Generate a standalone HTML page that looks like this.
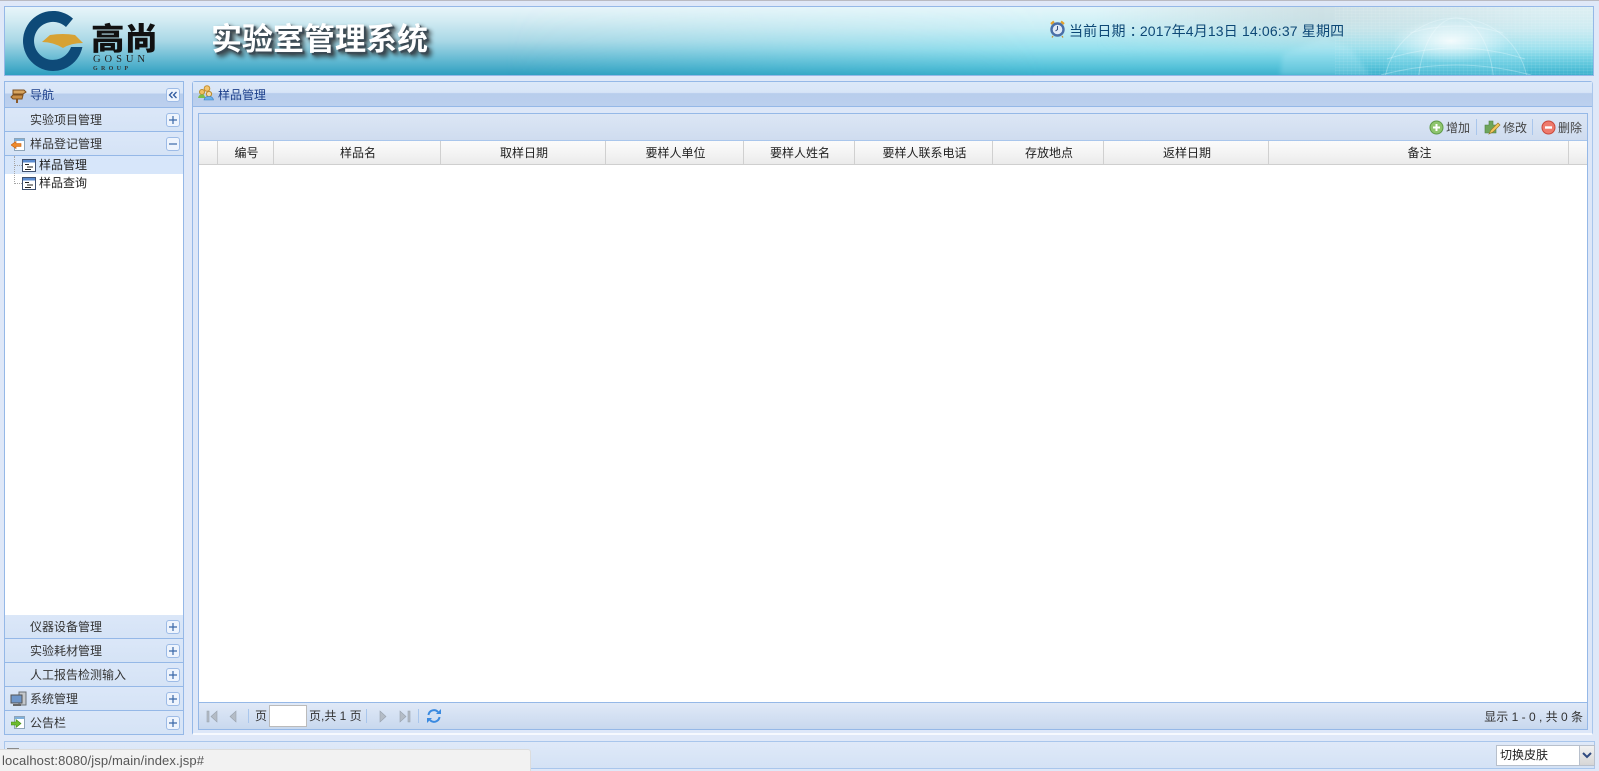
<!DOCTYPE html>
<html><head><meta charset="utf-8">
<style>
html,body{margin:0;padding:0}
body{width:1599px;height:771px;overflow:hidden;position:relative;background:#dfe8f8;font:12px/16px "Liberation Sans","Noto Sans CJK SC",sans-serif;color:#333}
.a{position:absolute;box-sizing:border-box}
.t{position:absolute;white-space:nowrap}
.acc{position:absolute;left:5px;width:179px;height:24px;box-sizing:border-box;background:linear-gradient(#dbe7f8,#d5e3f6);border-bottom:1px solid #95b8e7}
.acc .t{left:25px;top:4px;font-size:12px;line-height:17px;color:#333}
.btn{position:absolute;left:161px;top:5px;width:14px;height:14px;border:1px solid #9dbbe6;border-radius:3px;background:#eef4fd;box-sizing:border-box}
.btn svg{position:absolute;left:1px;top:1px}
.th{position:absolute;top:0;height:23px;line-height:25px;text-align:center;padding-left:2px;border-right:1px solid #d0d0d0;color:#222;box-sizing:border-box}
.sep{position:absolute;width:1px;background:#a9c6ec}
</style></head><body>
<div class="a" style="left:0;top:0;width:1599px;height:1px;background:#b9bac2"></div>

<!-- header -->
<div class="a" style="left:4px;top:6px;width:1590px;height:70px;border:1px solid #95b8e7;overflow:hidden;background:linear-gradient(#e8f5fa 0%,#d4ecf3 18%,#a9d8e6 50%,#63b9d2 78%,#2f9fc0 100%)">
 <div class="a" style="left:500px;top:0;width:1090px;height:70px;background:linear-gradient(#e4f6fa 0%,#c8eef5 30%,#94e0ee 60%,#57c3da 85%,#36acc9 100%);-webkit-mask-image:linear-gradient(90deg,transparent,#000 50%);mask-image:linear-gradient(90deg,transparent,#000 50%)"></div>
 <div class="a" style="left:1090px;top:0;width:500px;height:50px;background:linear-gradient(90deg,rgba(190,215,220,0),rgba(195,212,216,.6) 45%,rgba(215,232,236,.5) 90%);-webkit-mask-image:linear-gradient(#000 25%,transparent);mask-image:linear-gradient(#000 25%,transparent)"></div>
 <div class="a" style="left:1330px;top:0;width:260px;height:70px;background:repeating-linear-gradient(0deg,rgba(255,255,255,.07) 0 1px,transparent 1px 3px),repeating-linear-gradient(90deg,rgba(255,255,255,.06) 0 1px,transparent 1px 4px)"></div>
 <svg class="a" style="left:1270px;top:0" width="320" height="70" viewBox="0 0 320 70">
  <defs><radialGradient id="g1"><stop offset="0" stop-color="#fff" stop-opacity=".85"/><stop offset="1" stop-color="#fff" stop-opacity="0"/></radialGradient><filter id="b1"><feGaussianBlur stdDeviation="2"/></filter></defs>
  <path d="M8 47L50 30L76 42L95 68H5Z" fill="#c8f3f9" fill-opacity=".22" filter="url(#b1)"/>
  <circle cx="181" cy="83" r="72" fill="#b0eef7" fill-opacity=".16" filter="url(#b1)"/>
  <g fill="none" stroke="#eefcfe" stroke-opacity=".32"><circle cx="181" cy="83" r="72"/><ellipse cx="181" cy="83" rx="38" ry="72"/><path d="M112 52Q181 30 250 52M106 68Q181 48 256 68M135 26Q181 12 228 26"/></g>
  <ellipse cx="176" cy="34" rx="60" ry="22" fill="url(#g1)"/>
 </svg>
 <svg class="a" style="left:0;top:0" width="170" height="68" viewBox="0 0 170 68">
  <path d="M68 11.600A30 30 0 1 0 77.400 40H66A19 19 0 1 1 61 20Z" fill="#0e4a78"/>
  <path d="M37 35L45 28Q58 26 70 28L78 36Q66 36 58 41Q48 35 37 35Z" fill="#d7a234"/>
  <text x="86" y="43" font-family="'Noto Sans CJK SC',sans-serif" font-size="31" font-weight="900" fill="#111" textLength="67" lengthAdjust="spacingAndGlyphs">高尚</text>
  <text x="88" y="55" font-family="'Liberation Serif',serif" font-size="10.500" fill="#222" textLength="52">GOSUN</text>
  <text x="88" y="63" font-family="'Liberation Serif',serif" font-size="6" font-weight="700" fill="#333" textLength="35">GROUP</text>
 </svg>
 <div class="t" style="left:206px;top:9px;font:700 31px/42px 'Noto Sans CJK SC',sans-serif;color:#fff;text-shadow:2px 2px 1px #3a4a55,3px 3px 4px #333,5px 5px 5px rgba(0,0,0,.45)">实验室管理系统</div>
 <svg class="a" style="left:1045px;top:13px" width="15" height="18" viewBox="0 0 15 18"><circle cx="7.500" cy="9.500" r="6" fill="#dfe9f7" stroke="#4a6fa8" stroke-width="2.400"/><path d="M7.500 6V9.500L5.500 11" stroke="#33507f" fill="none"/><path d="M1 4L4 1.500M14 4L11 1.500" stroke="#e2a02c" stroke-width="2.200"/><path d="M3 16L2 17.500M12 16L13 17.500" stroke="#c89030" stroke-width="1.200"/></svg>
 <div class="t" style="left:1064px;top:14px;font-size:14px;line-height:20px;letter-spacing:.16px;color:#0d4876">当前日期<span style="position:relative;left:4px">：</span>2017年4月13日 14:06:37 星期四</div>
</div>

<!-- west panel -->
<div class="a" style="left:4px;top:81px;height:654px;border:1px solid #95b8e7;border-bottom-width:2px;background:#fff;width:180px"></div>
<div class="a" style="left:5px;top:82px;width:178px;height:26px;background:linear-gradient(#dce8f8 0,#d8e5f7 44%,#b8cdec 48%,#bcd0ee 100%);border-bottom:1px solid #95b8e7"></div>
<svg class="a" style="left:10px;top:88px" width="17" height="16" viewBox="0 0 17 16"><path d="M7 3V15" stroke="#8a5a2a" stroke-width="2"/><path d="M3 2H14L16 4L13 6H3Z" fill="#d8a55f" stroke="#7d5020"/><path d="M13 7H3L1 9L3 11H12Z" fill="#c98f48" stroke="#7d5020"/></svg>
<div class="t" style="left:30px;top:87px;color:#1c3f8a;line-height:17px">导航</div>
<div class="a" style="left:166px;top:88px;width:14px;height:14px;border:1px solid #9dbbe6;border-radius:3px;background:#eef4fd"><svg style="position:absolute;left:1px;top:1px" width="10" height="10" viewBox="0 0 10 10"><path d="M4.500 2L1.500 5L4.500 8M8.500 2L5.500 5L8.500 8" fill="none" stroke="#2f5a9f" stroke-width="1.300"/></svg></div>

<div class="acc" style="top:108px;width:178px"><div class="t">实验项目管理</div><div class="btn"><svg width="10" height="10"><path d="M5 1V9M1 5H9" stroke="#3a68a8" stroke-width="1.200"/></svg></div></div>
<div class="acc" style="top:132px;width:178px"><div class="t">样品登记管理</div><div class="btn"><svg width="10" height="10"><path d="M1 5H9" stroke="#3a68a8" stroke-width="1.200"/></svg></div>
 <svg style="position:absolute;left:6px;top:5px" width="15" height="15" viewBox="0 0 15 15"><rect x="3.500" y="1.500" width="10" height="12" fill="#fff" stroke="#8ea4b8"/><rect x="4" y="2" width="9" height="2" fill="#7fb0dc"/><path d="M0 8L5 4.500V6.500H10V9.500H5V11.500Z" fill="#ef8a2b" stroke="#c65f10" stroke-width=".6"/></svg>
</div>

<!-- tree -->
<div class="a" style="left:5px;top:156px;width:178px;height:18px;background:#d7e6fa"></div>
<div class="a" style="left:14px;top:156px;height:28px;border-left:1px dotted #a5a5a5"></div>
<div class="a" style="left:14px;top:165px;width:8px;border-top:1px dotted #a5a5a5"></div>
<div class="a" style="left:14px;top:183px;width:8px;border-top:1px dotted #a5a5a5"></div>
<svg class="a" style="left:22px;top:159px" width="14" height="13" viewBox="0 0 14 13"><rect x=".5" y=".5" width="13" height="12" fill="#fff" stroke="#3e4f6e"/><rect x="1" y="1" width="12" height="2.500" fill="#5a8bd0"/><path d="M3 5.500H7M5 8H11M3 10.500H9" stroke="#222"/></svg>
<svg class="a" style="left:22px;top:177px" width="14" height="13" viewBox="0 0 14 13"><rect x=".5" y=".5" width="13" height="12" fill="#fff" stroke="#3e4f6e"/><rect x="1" y="1" width="12" height="2.500" fill="#5a8bd0"/><path d="M3 5.500H7M5 8H11M3 10.500H9" stroke="#222"/></svg>
<div class="t" style="left:39px;top:157px;line-height:17px;color:#222">样品管理</div>
<div class="t" style="left:39px;top:175px;line-height:17px;color:#222">样品查询</div>

<div class="acc" style="top:615px;width:178px"><div class="t">仪器设备管理</div><div class="btn"><svg width="10" height="10"><path d="M5 1V9M1 5H9" stroke="#3a68a8" stroke-width="1.200"/></svg></div></div>
<div class="acc" style="top:639px;width:178px"><div class="t">实验耗材管理</div><div class="btn"><svg width="10" height="10"><path d="M5 1V9M1 5H9" stroke="#3a68a8" stroke-width="1.200"/></svg></div></div>
<div class="acc" style="top:663px;width:178px"><div class="t">人工报告检测输入</div><div class="btn"><svg width="10" height="10"><path d="M5 1V9M1 5H9" stroke="#3a68a8" stroke-width="1.200"/></svg></div></div>
<div class="acc" style="top:687px;width:178px"><div class="t">系统管理</div><div class="btn"><svg width="10" height="10"><path d="M5 1V9M1 5H9" stroke="#3a68a8" stroke-width="1.200"/></svg></div>
 <svg style="position:absolute;left:5px;top:4px" width="17" height="16" viewBox="0 0 17 16"><rect x="9" y="1" width="7" height="13" fill="#c4c8cc" stroke="#6c7278"/><rect x="1" y="4" width="11" height="8" fill="#6f96c9" stroke="#555"/><path d="M3 14H11" stroke="#666" stroke-width="2"/></svg>
</div>
<div class="acc" style="top:711px;width:178px;height:23px;border-bottom:0"><div class="t">公告栏</div><div class="btn"><svg width="10" height="10"><path d="M5 1V9M1 5H9" stroke="#3a68a8" stroke-width="1.200"/></svg></div>
 <svg style="position:absolute;left:6px;top:4px" width="15" height="15" viewBox="0 0 15 15"><rect x="3.500" y="1.500" width="10" height="12" fill="#fff" stroke="#8ea4b8"/><rect x="4" y="2" width="9" height="2" fill="#7fb0dc"/><path d="M0 7H5V4.500L10 8.500L5 12.500V10H0Z" fill="#6dbb2f" stroke="#3e8a10" stroke-width=".6"/></svg>
</div>

<!-- center panel -->
<div class="a" style="left:192px;top:81px;width:1401px;height:654px;border:1px solid #95b8e7;border-radius:3px 3px 0 0;border-bottom:2px solid #f6f9fe;border-right-color:#a9c6ec;background:#dde7f8"></div>
<div class="a" style="left:193px;top:82px;width:1399px;height:25px;background:linear-gradient(#dce8f8 0,#d8e5f7 44%,#b8cdec 48%,#bcd0ee 100%);border-bottom:1px solid #95b8e7"></div>
<svg class="a" style="left:198px;top:85px" width="16" height="16" viewBox="0 0 16 16"><circle cx="4" cy="7" r="2.500" fill="#f0c060" stroke="#b98a2a"/><path d="M0 13Q1 9 4 9.500Q6 9 7 12V13Z" fill="#7bbd4a"/><circle cx="9" cy="3.500" r="2.800" fill="#f3c670" stroke="#c89030"/><circle cx="11" cy="9" r="2.600" fill="#f5d7a0" stroke="#b98a2a"/><path d="M6 15Q7 11 11 11.500Q14.500 11 15.500 15Z" fill="#6ab0ea" stroke="#3f82c0" stroke-width=".6"/></svg>
<div class="t" style="left:218px;top:87px;line-height:17px;color:#1c3f8a">样品管理</div>

<!-- grid -->
<div class="a" style="left:198px;top:113px;width:1390px;height:617px;border:1px solid #95b8e7;background:#fff"></div>
<div class="a" style="left:199px;top:114px;width:1388px;height:27px;background:linear-gradient(#dce6f5,#cfdcef);border-bottom:1px solid #a9c6ec"></div>
<svg class="a" style="left:1429px;top:120px" width="15" height="15" viewBox="0 0 15 15"><circle cx="7.500" cy="7.500" r="6.500" fill="#8ec56e" stroke="#5e9a47"/><path d="M7.500 4V11M4 7.500H11" stroke="#fff" stroke-width="2"/></svg>
<div class="t" style="left:1446px;top:120px;line-height:17px;color:#444">增加</div>
<div class="sep" style="left:1476px;top:119px;height:16px"></div>
<svg class="a" style="left:1484px;top:119px" width="17" height="17" viewBox="0 0 17 17"><path d="M1 6H5V2H9V6H12V14H1Z" fill="#6fa55a" stroke="#4c8040" stroke-width=".6"/><path d="M5 15L7 11L14 4L16 6L9 13Z" fill="#f2c85c" stroke="#9a7a2a" stroke-width=".7"/></svg>
<div class="t" style="left:1503px;top:120px;line-height:17px;color:#444">修改</div>
<div class="sep" style="left:1532px;top:119px;height:16px"></div>
<svg class="a" style="left:1541px;top:120px" width="15" height="15" viewBox="0 0 15 15"><circle cx="7.500" cy="7.500" r="6.500" fill="#ee7a6c" stroke="#c9483a"/><path d="M4 7.500H11" stroke="#fff" stroke-width="2.400"/></svg>
<div class="t" style="left:1558px;top:120px;line-height:17px;color:#444">删除</div>

<div class="a" style="left:199px;top:141px;width:1388px;height:24px;background:linear-gradient(#fbfbfb,#f4f4f4 50%,#ebebeb);border-bottom:1px solid #cfcfcf">
 <div class="th" style="left:0;width:19px"></div>
 <div class="th" style="left:19px;width:56px">编号</div>
 <div class="th" style="left:75px;width:167px">样品名</div>
 <div class="th" style="left:242px;width:165px">取样日期</div>
 <div class="th" style="left:407px;width:138px">要样人单位</div>
 <div class="th" style="left:545px;width:111px">要样人姓名</div>
 <div class="th" style="left:656px;width:138px">要样人联系电话</div>
 <div class="th" style="left:794px;width:111px">存放地点</div>
 <div class="th" style="left:905px;width:165px">返样日期</div>
 <div class="th" style="left:1070px;width:300px">备注</div>
</div>

<!-- pager -->
<div class="a" style="left:199px;top:702px;width:1388px;height:27px;background:linear-gradient(#e0e9f7,#c8d8ee);border-top:1px solid #95b8e7"></div>
<svg class="a" style="left:206px;top:710px" width="12" height="13" viewBox="0 0 12 13"><path d="M1 1H3V12H1ZM11 1V12L5 6.500Z" fill="#b4bcc6" stroke="#98a2ae" stroke-width=".6"/></svg>
<svg class="a" style="left:229px;top:710px" width="9" height="13" viewBox="0 0 9 13"><path d="M7 1V12L1 6.500Z" fill="#b4bcc6" stroke="#98a2ae" stroke-width=".6"/></svg>
<div class="sep" style="left:248px;top:709px;height:14px"></div>
<div class="t" style="left:255px;top:708px;line-height:17px;color:#333">页</div>
<div class="a" style="left:269px;top:705px;width:38px;height:22px;border:1px solid #bbb;background:#fff"></div>
<div class="t" style="left:309px;top:708px;line-height:17px;color:#333">页,共 1 页</div>
<div class="sep" style="left:366px;top:709px;height:14px"></div>
<svg class="a" style="left:379px;top:710px" width="9" height="13" viewBox="0 0 9 13"><path d="M1 1V12L7 6.500Z" fill="#b4bcc6" stroke="#98a2ae" stroke-width=".6"/></svg>
<svg class="a" style="left:399px;top:710px" width="12" height="13" viewBox="0 0 12 13"><path d="M1 1V12L7 6.500ZM9 1H11V12H9Z" fill="#b4bcc6" stroke="#98a2ae" stroke-width=".6"/></svg>
<div class="sep" style="left:418px;top:709px;height:14px"></div>
<svg class="a" style="left:426px;top:708px" width="16" height="16" viewBox="0 0 16 16"><path d="M2.500 7A5.500 5.500 0 0 1 12 4" fill="none" stroke="#3a8ae0" stroke-width="2"/><path d="M10 6H15V1Z" fill="#3a8ae0"/><path d="M13.500 9A5.500 5.500 0 0 1 4 12" fill="none" stroke="#3a8ae0" stroke-width="2"/><path d="M6 10H1V15Z" fill="#3a8ae0"/></svg>
<div class="t" style="right:16px;top:709px;line-height:17px;color:#333">显示 1 - 0 , 共 0 条</div>

<!-- south -->
<div class="a" style="left:4px;top:741px;width:1591px;height:28px;border:1px solid #a9c6ec;background:linear-gradient(#dfe9f8,#d4e2f5)"></div>
<div class="a" style="left:1496px;top:745px;width:99px;height:21px;border:1px solid #b8c0cc;background:#fff"></div>
<div class="t" style="left:1500px;top:747px;line-height:17px;color:#222">切换皮肤</div>
<div class="a" style="left:1579px;top:745px;width:16px;height:21px;border:1px solid #b8c0cc;background:linear-gradient(#f2f2f2,#d6d6d6)"><svg style="position:absolute;left:2px;top:6px" width="10" height="7"><path d="M1 1L5 5L9 1" fill="none" stroke="#2f4a80" stroke-width="2"/></svg></div>

<!-- status bubble -->
<div class="a" style="left:7px;top:748px;width:12px;height:1px;background:#8a8a8a"></div>
<div class="a" style="left:0;top:749px;width:531px;height:22px;background:#f2f2f2;border-top:1px solid #dcdcdc;border-right:1px solid #dcdcdc;border-radius:0 3px 0 0"></div>
<div class="t" style="left:2px;top:752px;font-size:13px;line-height:18px;letter-spacing:.12px;color:#555">localhost:8080/jsp/main/index.jsp#</div>
</body></html>
